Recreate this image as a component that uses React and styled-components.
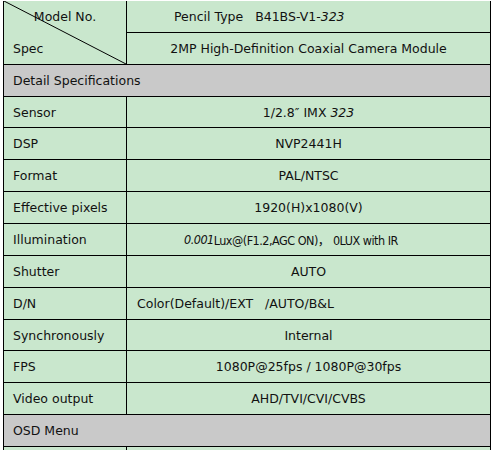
import React from "react";
import styled, { createGlobalStyle } from "styled-components";

const GREEN = "#c9e7cd";
const GRAY = "#c9c9c9";
const LINE = "#000";

const Global = createGlobalStyle`
  html, body { margin: 0; padding: 0; background: #fff; }
`;

const Sheet = styled.div`
  margin: 1px 0 0 3px;
  width: 488px;
  box-sizing: border-box;
  border-left: 1px solid ${LINE};
  border-right: 1px solid ${LINE};
  font-family: "DejaVu Sans", "Noto Sans CJK SC", sans-serif;
  font-size: 12.5px;
  color: #111;
`;

const Header = styled.div`
  position: relative;
  display: grid;
  grid-template-columns: 123px 1fr;
  grid-template-rows: 32px 32px;
  background: ${GREEN};
`;

const Corner = styled.div`
  position: relative;
  grid-row: 1 / span 2;
  display: grid;
  grid-template-rows: 1fr 1fr;
  border-right: 1px solid ${LINE};
  border-bottom: 1px solid ${LINE};
`;

const CornerText = styled.div`
  display: flex;
  align-items: center;
  justify-content: ${(p) => (p.$center ? "center" : "flex-start")};
  padding-left: ${(p) => (p.$center ? "0" : "9px")};
  padding-bottom: ${(p) => (p.$center ? "1px" : "0")};
`;

const Diagonal = styled.svg`
  position: absolute;
  inset: 0;
  width: 100%;
  height: 100%;
  pointer-events: none;
`;

const Row = styled.div`
  display: grid;
  grid-template-columns: ${(p) => (p.$section ? "1fr" : "123px 1fr")};
  height: ${(p) => p.$h || 32}px;
  box-sizing: border-box;
  border-bottom: 1px solid ${LINE};
  background: ${(p) => (p.$section ? GRAY : GREEN)};
`;

const Label = styled.div`
  display: flex;
  align-items: center;
  padding-left: 9px;
  border-right: ${(p) => (p.$full ? "none" : `1px solid ${LINE}`)};
`;

const Value = styled.div`
  display: flex;
  align-items: center;
  justify-content: ${(p) => (p.$indent != null ? "flex-start" : "center")};
  padding-left: ${(p) => p.$indent || 0}px;
  white-space: pre;
  border-bottom: ${(p) => (p.$line ? `1px solid ${LINE}` : "none")};
  ${(p) =>
    p.$narrow &&
    `font-family: "DejaVu Sans Condensed", "DejaVu Sans", "Noto Sans CJK SC", sans-serif;
     letter-spacing: -0.5px;`}
`;

const Em = styled.i`
  font-style: italic;
`;

const rows = [
  { label: "Detail Specifications", section: true },
  { label: "Sensor", h: 31, value: <>1/2.8″ IMX <Em>323</Em></> },
  { label: "DSP", value: "NVP2441H" },
  { label: "Format", value: "PAL/NTSC" },
  { label: "Effective pixels", value: "1920(H)x1080(V)" },
  {
    label: "Illumination",
    indent: 57,
    narrow: true,
    value: <><Em>0.001</Em>Lux@(F1.2,AGC ON)， 0LUX with IR</>,
  },
  { label: "Shutter", value: "AUTO" },
  { label: "D/N", indent: 10, value: "Color(Default)/EXT   /AUTO/B&L" },
  { label: "Synchronously", h: 31, value: "Internal" },
  { label: "FPS", value: "1080P@25fps / 1080P@30fps" },
  { label: "Video output", value: "AHD/TVI/CVI/CVBS" },
  { label: "OSD Menu", section: true },
  { label: "", value: "" },
];

export default function App() {
  return (
    <>
      <Global />
      <Sheet>
        <Header>
          <Corner>
            <CornerText $center>Model No.</CornerText>
            <CornerText>Spec</CornerText>
            <Diagonal preserveAspectRatio="none" viewBox="0 0 100 100">
              <line
                x1="0"
                y1="0"
                x2="100"
                y2="100"
                stroke="#000"
                strokeWidth="1"
                vectorEffect="non-scaling-stroke"
              />
            </Diagonal>
          </Corner>
          <Value $line $indent={47}>
            Pencil Type   B41BS-V1-<Em>323</Em>
          </Value>
          <Value $line>2MP High-Definition Coaxial Camera Module</Value>
        </Header>
        {rows.map((r, i) =>
          r.section ? (
            <Row key={i} $section>
              <Label $full>{r.label}</Label>
            </Row>
          ) : (
            <Row key={i} $h={r.h}>
              <Label>{r.label}</Label>
              <Value $indent={r.indent} $narrow={r.narrow}>
                {r.value}
              </Value>
            </Row>
          )
        )}
      </Sheet>
    </>
  );
}
